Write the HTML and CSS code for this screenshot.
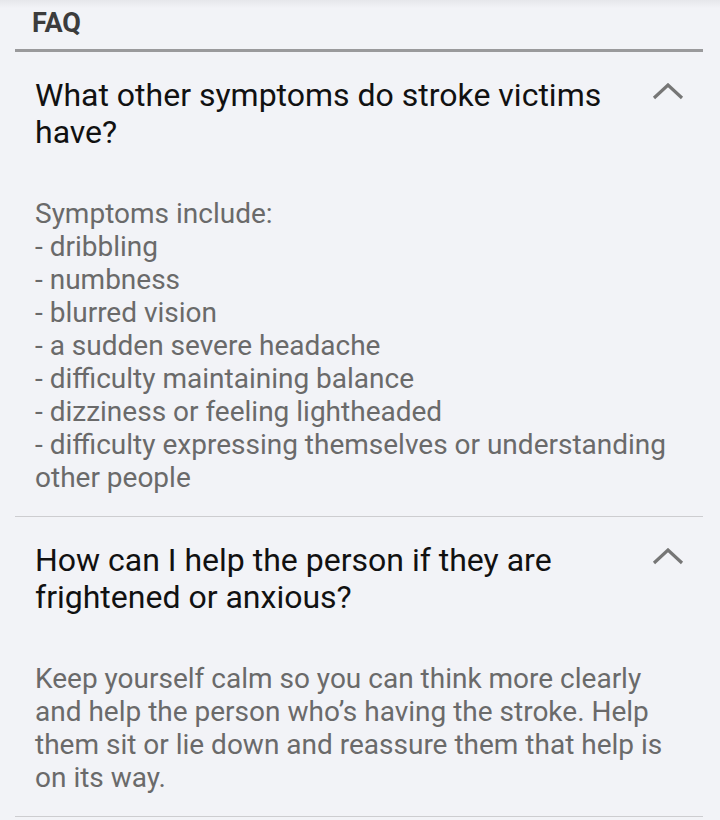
FILE: index.html
```html
<!DOCTYPE html>
<html>
<head>
<meta charset="utf-8">
<link rel="stylesheet" href="styles.css">
</head>
<body>
<div class="page">
  <div class="header">FAQ</div>
  <div class="rule"></div>
  <div class="item">
    <div class="q">
      <div class="q-text">What other symptoms do stroke victims have?</div>
      <svg class="chev" width="32" height="18" viewBox="0 0 32 18"><path d="M2 15 L16 2 L30 15" fill="none" stroke="#767676" stroke-width="3.2"/></svg>
    </div>
    <div class="a">Symptoms include:<br>- dribbling<br>- numbness<br>- blurred vision<br>- a sudden severe headache<br>- difficulty maintaining balance<br>- dizziness or feeling lightheaded<br>- difficulty expressing themselves or understanding other people</div>
  </div>
  <div class="item">
    <div class="q">
      <div class="q-text">How can I help the person if they are frightened or anxious?</div>
      <svg class="chev" width="32" height="18" viewBox="0 0 32 18"><path d="M2 15 L16 2 L30 15" fill="none" stroke="#767676" stroke-width="3.2"/></svg>
    </div>
    <div class="a">Keep yourself calm so you can think more clearly and help the person who’s having the stroke. Help them sit or lie down and reassure them that help is on its way.</div>
  </div>
</div>
</body>
</html>
```
FILE: styles.css
```css
html, body {
  margin: 0;
  padding: 0;
  background: #f2f3f7;
}
.page {
  font-family: Roboto, "Noto Sans", sans-serif;
  background: linear-gradient(#e6e7eb, #f2f3f7 8px);
  padding: 0 17px 0 15px;
}
.header {
  font-weight: bold;
  font-size: 27px;
  color: #3c3c3c;
  padding: 6px 0 0 17px;
  height: 49px;
  box-sizing: border-box;
  line-height: 34px;
}
.rule {
  height: 3px;
  background: #9a9a9c;
}
.item {
  border-bottom: 1px solid #cdcdd0;
  padding: 0 0 22px 20px;
}
.q {
  display: flex;
  justify-content: space-between;
  align-items: flex-start;
  padding-top: 25px;
}
.q-text {
  font-size: 32px;
  line-height: 37px;
  color: #111;
  width: 600px;
}
.chev {
  margin: 6px 19px 0 0;
  flex: none;
}
.a {
  margin-top: 46px;
  font-size: 28px;
  line-height: 33px;
  color: #6a6a6a;
  padding-right: 24px;
}
```
